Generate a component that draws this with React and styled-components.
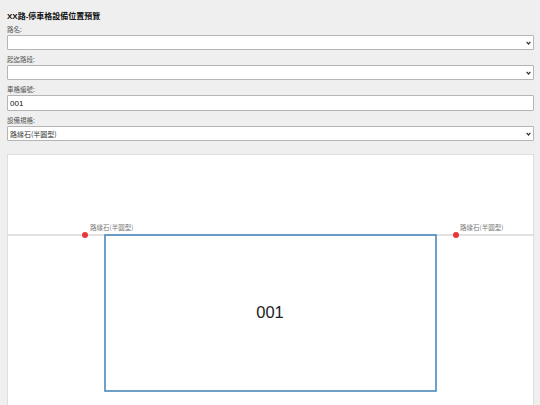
import React, { useState } from 'react'
import styled, { createGlobalStyle } from 'styled-components'

const GlobalStyle = createGlobalStyle`
  html, body {
    margin: 0;
    padding: 0;
    background: #efefef;
  }
  body {
    font-family: "Liberation Sans", "Noto Sans CJK TC", Arial, sans-serif;
  }
`

const specs = ['路緣石(半圓型)', '路緣石(方型)', '地磁感應器']

function Chevron() {
  return (
    <Arrow width="5" height="4" viewBox="0 0 5 4">
      <path d="M0.6 0.8 L2.5 3 L4.4 0.8" fill="none" stroke="#333" strokeWidth="1.2" />
    </Arrow>
  )
}

function App() {
  const [code, setCode] = useState('001')
  const [spec, setSpec] = useState(specs[0])

  return (
    <>
      <GlobalStyle />
      <Page>
        <Title>XX路-停車格設備位置預覽</Title>

        <Field>
          <Label>路名:</Label>
          <SelectWrap>
            <Select defaultValue="">
              <option value=""></option>
            </Select>
            <Chevron />
          </SelectWrap>
        </Field>

        <Field>
          <Label>起迄路段:</Label>
          <SelectWrap>
            <Select defaultValue="">
              <option value=""></option>
            </Select>
            <Chevron />
          </SelectWrap>
        </Field>

        <Field>
          <Label>車格編號:</Label>
          <Input type="text" value={code} onChange={e => setCode(e.target.value)} />
        </Field>

        <Field>
          <Label>設備規格:</Label>
          <SelectWrap>
            <Select value={spec} onChange={e => setSpec(e.target.value)}>
              {specs.map(s => <option key={s} value={s}>{s}</option>)}
            </Select>
            <Chevron />
          </SelectWrap>
        </Field>

        <Preview>
          <svg width="100%" height="300" viewBox="0 0 525 300" preserveAspectRatio="xMinYMin meet">
            <line x1="0" y1="80" x2="525" y2="80" stroke="#d9d9d9" strokeWidth="1.6" />
            <rect x="97" y="80" width="331" height="156" fill="none" stroke="#4a89bd" strokeWidth="1.6" />
            <text x="262" y="163" textAnchor="middle" fontSize="16.5" fill="#222"
              fontFamily='"Liberation Sans", Arial, sans-serif'>{code}</text>

            <circle cx="77" cy="80" r="3" fill="#e8363a" />
            <SpecText x="82" y="75">{spec}</SpecText>

            <circle cx="448" cy="80" r="3" fill="#e8363a" />
            <SpecText x="452" y="75">{spec}</SpecText>
          </svg>
        </Preview>
      </Page>
    </>
  )
}

const Page = styled.div`
  padding: 12px 6px 0 7px;
`
const Title = styled.h1`
  margin: 0 0 3px 0;
  font-size: 8px;
  line-height: 10px;
  font-weight: bold;
  color: #111;
`
const Field = styled.div`
  display: flex;
  flex-direction: column;
  margin-bottom: 5px;
`
const Label = styled.label`
  font-size: 6.5px;
  line-height: 9px;
  color: #555;
  margin-bottom: 1px;
  font-family: "Noto Sans CJK TC", "Liberation Serif", serif;
`
const SelectWrap = styled.div`
  position: relative;
`
const Select = styled.select`
  appearance: none;
  -webkit-appearance: none;
  display: block;
  box-sizing: border-box;
  width: 100%;
  height: 15px;
  margin: 0;
  padding: 0 10px 0 2px;
  font-size: 7px;
  font-family: "Noto Sans CJK TC", "Liberation Sans", sans-serif;
  color: #333;
  background: #fff;
  border: 1px solid #b5b5b5;
  border-radius: 1px;
  outline: none;
`
const Arrow = styled.svg`
  position: absolute;
  right: 3px;
  top: 50%;
  transform: translateY(-50%);
  pointer-events: none;
`
const Input = styled.input`
  display: block;
  box-sizing: border-box;
  width: 100%;
  height: 16px;
  margin: 0;
  padding: 0 2px;
  font-size: 8px;
  font-family: "Liberation Sans", Arial, sans-serif;
  color: #111;
  background: #fff;
  border: 1px solid #b5b5b5;
  border-radius: 1px;
  outline: none;
`
const Preview = styled.div`
  margin-top: 13px;
  background: #fff;
  border: 1px solid #dedede;
  height: 300px;
  svg {
    display: block;
  }
`
const SpecText = styled.text`
  font-size: 6.5px;
  fill: #777;
  font-family: "Noto Sans CJK TC", sans-serif;
`

export default App
